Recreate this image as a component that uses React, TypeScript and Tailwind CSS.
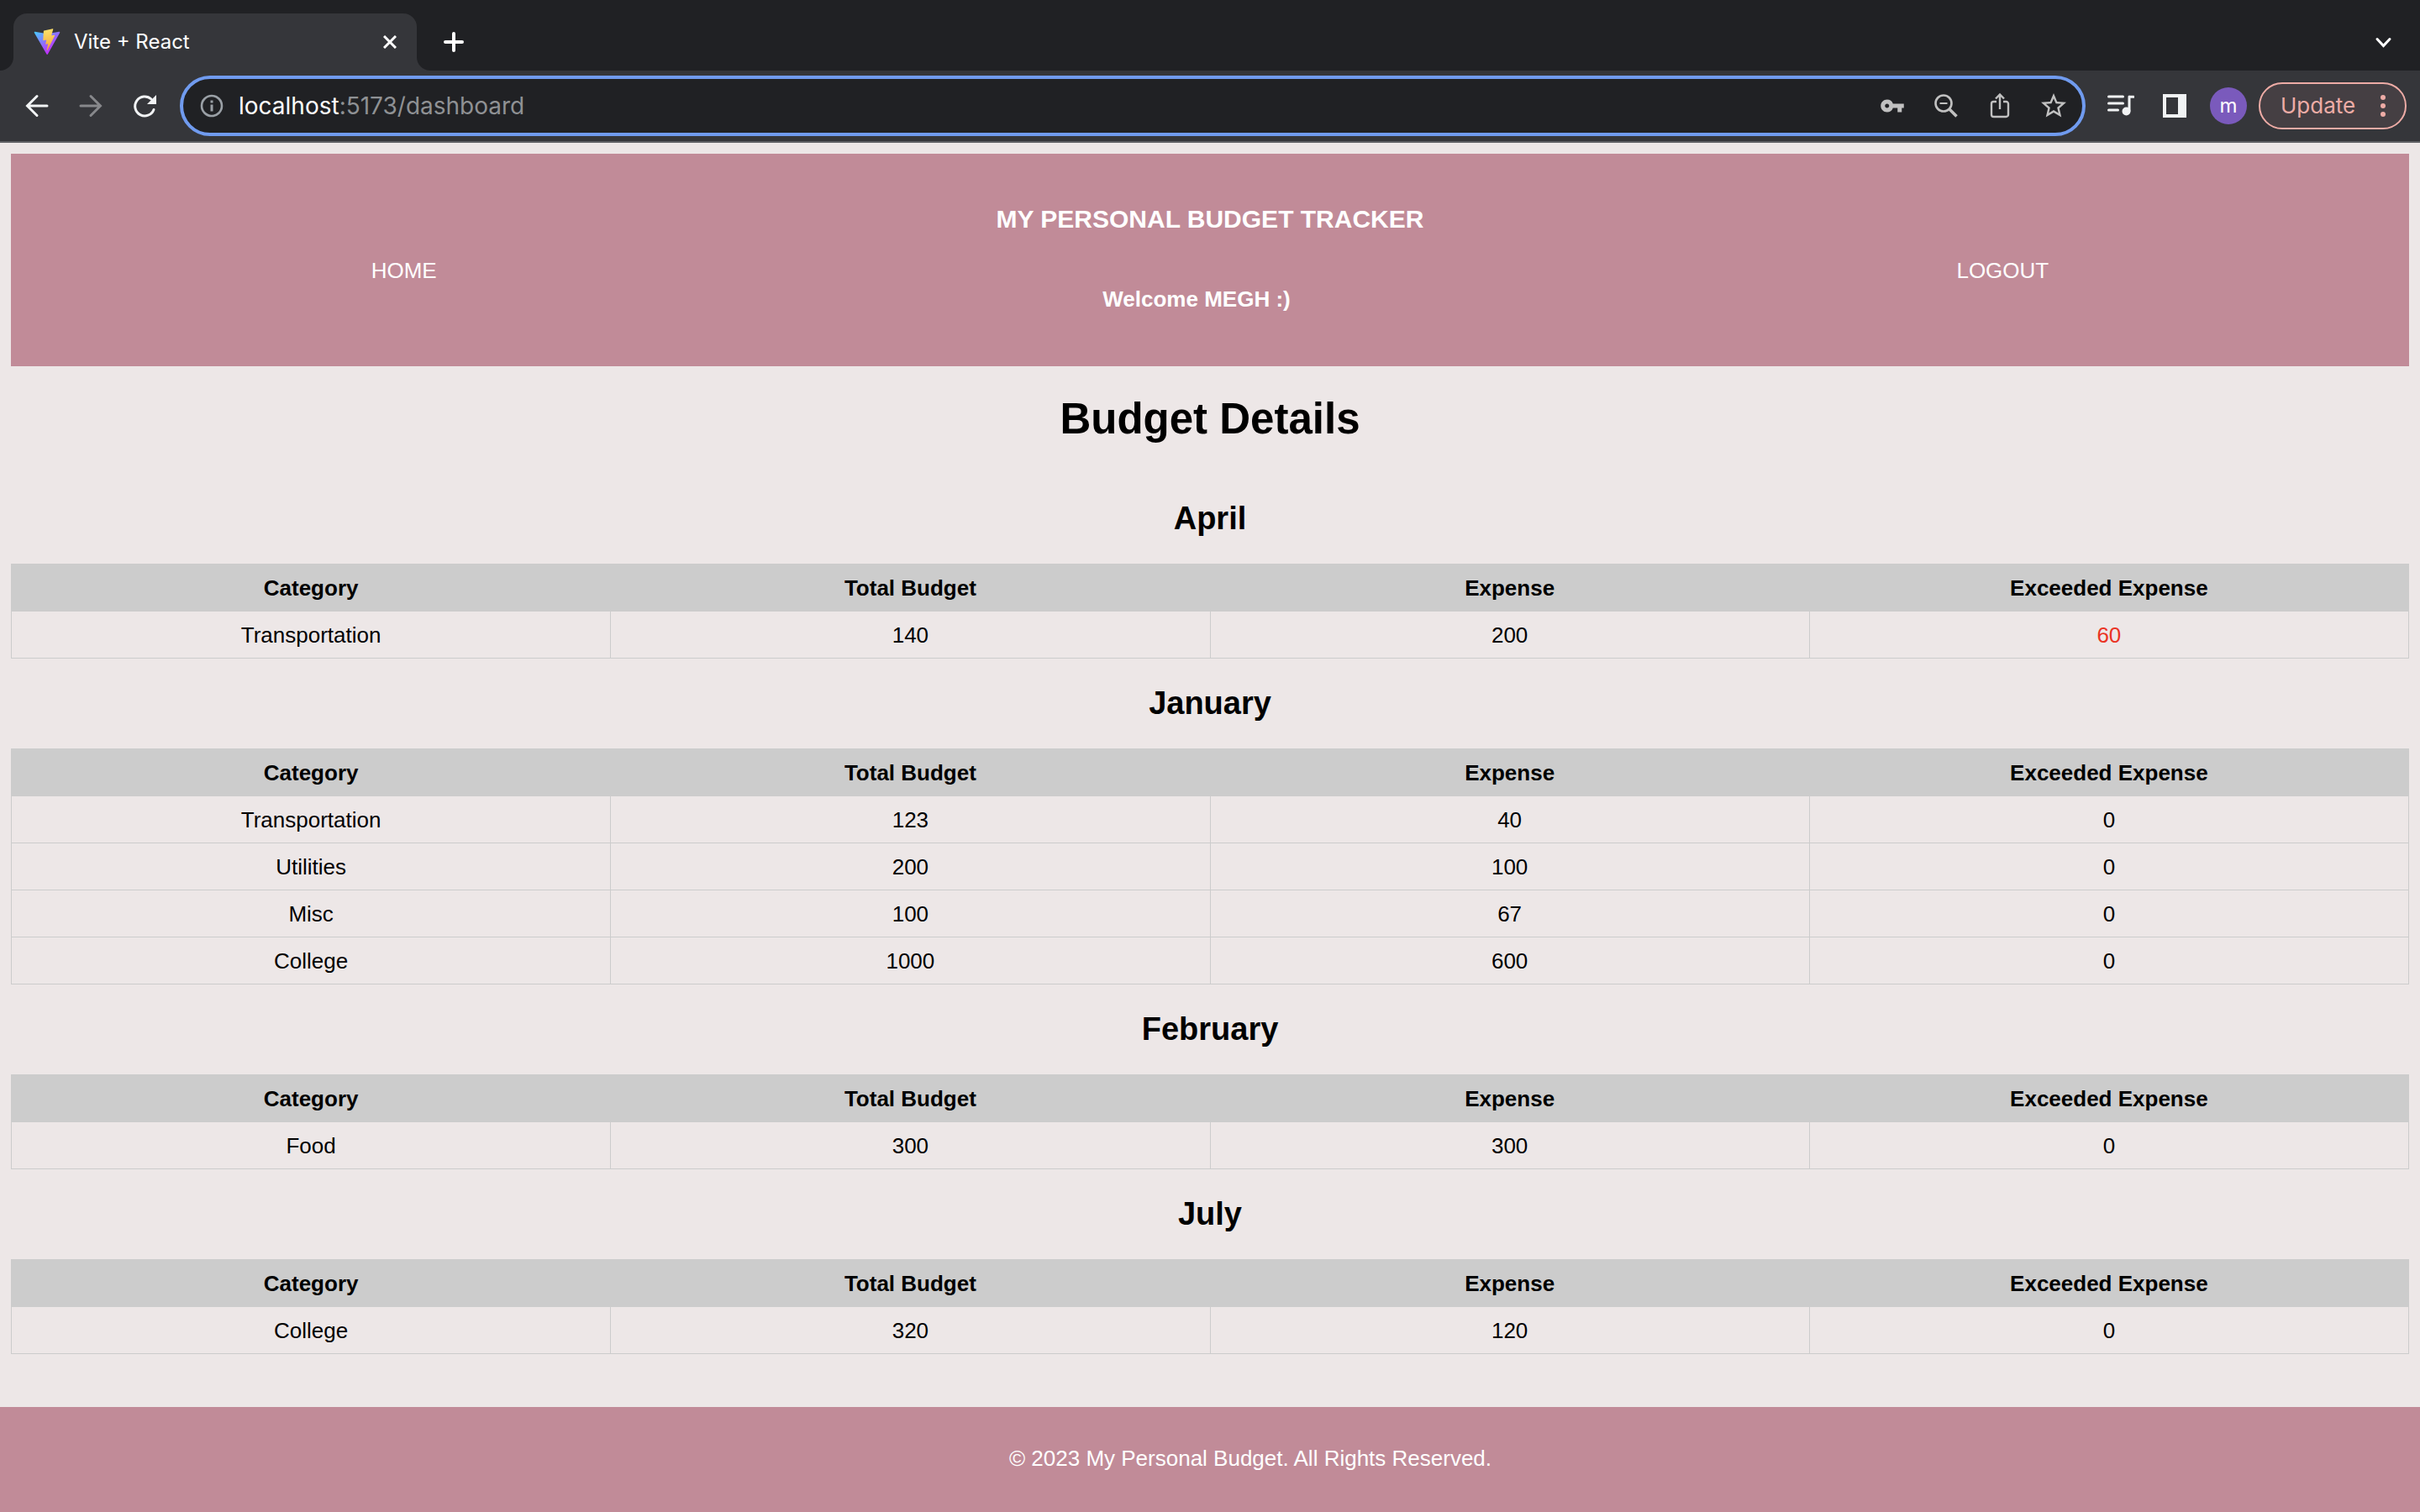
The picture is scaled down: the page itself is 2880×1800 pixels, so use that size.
import React from "react";
import { MdVpnKey } from "react-icons/md";

type Row = { category: string; budget: number; expense: number; exceeded: number };
type Month = { name: string; rows: Row[] };

const months: Month[] = [
  { name: "April", rows: [{ category: "Transportation", budget: 140, expense: 200, exceeded: 60 }] },
  {
    name: "January",
    rows: [
      { category: "Transportation", budget: 123, expense: 40, exceeded: 0 },
      { category: "Utilities", budget: 200, expense: 100, exceeded: 0 },
      { category: "Misc", budget: 100, expense: 67, exceeded: 0 },
      { category: "College", budget: 1000, expense: 600, exceeded: 0 },
    ],
  },
  { name: "February", rows: [{ category: "Food", budget: 300, expense: 300, exceeded: 0 }] },
  { name: "July", rows: [{ category: "College", budget: 320, expense: 120, exceeded: 0 }] },
];

const columns = ["Category", "Total Budget", "Expense", "Exceeded Expense"];

function ViteLogo() {
  return (
    <svg viewBox="0 0 410 404" className="h-8 w-8" aria-hidden="true">
      <defs>
        <linearGradient id="vite-a" x1="6" y1="33" x2="235" y2="344" gradientUnits="userSpaceOnUse">
          <stop stopColor="#41D1FF" />
          <stop offset="1" stopColor="#BD34FE" />
        </linearGradient>
        <linearGradient id="vite-b" x1="194.651" y1="8.818" x2="236.076" y2="292.989" gradientUnits="userSpaceOnUse">
          <stop stopColor="#FFE36B" />
          <stop offset="1" stopColor="#F3A93C" />
        </linearGradient>
      </defs>
      <path
        fill="url(#vite-a)"
        d="M399.641 59.525L215.643 388.545c-3.799 6.793-13.559 6.833-17.415.073L10.582 59.556C6.38 52.19 12.68 43.267 21.028 44.76l184.195 32.923c1.175.21 2.378.208 3.553-.006l180.343-32.87c8.32-1.517 14.649 7.337 10.522 14.719z"
      />
      <path
        fill="url(#vite-b)"
        d="M292.965 1.574L156.801 28.255c-2.238.439-3.906 2.332-4.04 4.609l-8.376 141.464c-.198 3.333 2.863 5.919 6.115 5.168l37.910-8.749c3.547-.818 6.752 2.306 6.023 5.873l-11.263 55.153c-.758 3.712 2.727 6.886 6.352 5.785l23.415-7.114c3.630-1.103 7.118 2.081 6.350 5.796l-17.899 86.633c-1.120 5.419 6.088 8.374 9.094 3.728l2.008-3.103 110.954-221.428c1.858-3.707-1.346-7.935-5.418-7.150l-39.022 7.532c-3.667.707-6.787-2.708-5.752-6.296l25.469-88.291c1.036-3.594-2.094-7.012-5.756-6.291z"
      />
    </svg>
  );
}

function TabStrip() {
  return (
    <div className="flex h-[84px] items-end bg-[#202124]">
      <svg viewBox="0 0 16 16" className="h-4 w-4 text-[#35363a]" aria-hidden="true">
        <path d="M16 0v16H0A16 16 0 0 0 16 0z" fill="currentColor" />
      </svg>
      <div className="flex h-[68px] w-[480px] items-center rounded-t-2xl bg-[#35363a] pr-6 pl-6">
        <ViteLogo />
        <span className="ml-4 flex-1 text-2xl text-white">Vite + React</span>
        <button type="button" aria-label="Close tab" className="text-white">
          <svg viewBox="0 0 16 16" className="h-4 w-4" fill="none" stroke="currentColor" strokeWidth="3">
            <path d="M1 1l14 14M15 1L1 15" />
          </svg>
        </button>
      </div>
      <svg viewBox="0 0 16 16" className="h-4 w-4 text-[#35363a]" aria-hidden="true">
        <path d="M0 0v16h16A16 16 0 0 1 0 0z" fill="currentColor" />
      </svg>
      <button type="button" aria-label="New tab" className="ml-4 flex h-[68px] items-center text-white">
        <svg viewBox="0 0 24 24" className="h-6 w-6" fill="none" stroke="currentColor" strokeWidth="4" strokeLinecap="round">
          <path d="M12 2v20M2 12h20" />
        </svg>
      </button>
      <button type="button" aria-label="Search tabs" className="mr-8 ml-auto flex h-[68px] items-center text-white">
        <svg viewBox="0 0 24 24" className="h-6 w-6" fill="none" stroke="currentColor" strokeWidth="3" strokeLinecap="round">
          <path d="M5 8.500l7.500 8 7.500-8" />
        </svg>
      </button>
    </div>
  );
}

function IconButton({ label, className, children }: { label: string; className?: string; children: React.ReactNode }) {
  return (
    <button type="button" aria-label={label} className={"flex h-8 w-8 shrink-0 items-center justify-center " + (className ?? "")}>
      {children}
    </button>
  );
}

function Toolbar() {
  return (
    <div className="flex h-[86px] items-center border-b-2 border-[#5f6064] bg-[#35363a] pr-4 pl-7 text-[#f1f3f4]">
      <div className="flex items-center gap-8">
        <IconButton label="Back">
          <svg viewBox="0 0 32 32" className="h-8 w-8" fill="none" stroke="currentColor" strokeWidth="3" strokeLinecap="round">
            <path d="M28 16H5M16 4.500L4.500 16 16 27.500" />
          </svg>
        </IconButton>
        <IconButton label="Forward" className="text-[#87888b]">
          <svg viewBox="0 0 32 32" className="h-8 w-8" fill="none" stroke="currentColor" strokeWidth="3" strokeLinecap="round">
            <path d="M4 16h23M16 4.500L27.500 16 16 27.500" />
          </svg>
        </IconButton>
        <IconButton label="Reload">
          <svg viewBox="0 0 32 32" className="h-8 w-8" fill="none" stroke="currentColor" strokeWidth="3" strokeLinecap="round">
            <path d="M27 20.500A11.500 11.500 0 1 1 24 8" />
            <path d="M30 3v11H19z" fill="currentColor" stroke="none" />
          </svg>
        </IconButton>
      </div>

      <div className="ml-[26px] flex h-[72px] flex-1 items-center rounded-full border-4 border-[#709bef] bg-[#202124] px-[18px] text-[#bdc1c6]">
        <IconButton label="Site information" className="text-[#9aa0a6]">
          <svg viewBox="0 0 32 32" className="h-8 w-8" fill="none" stroke="currentColor" strokeWidth="2.600">
            <circle cx="16" cy="16" r="12" />
            <path d="M16 14.500v8M16 9.500v3" strokeWidth="3" />
          </svg>
        </IconButton>
        <div className="ml-4 flex-1 text-[28px] text-[#8f9194]">
          <span className="text-white">localhost</span>:5173/dashboard
        </div>
        <div className="flex items-center gap-8 text-[#c1c1c1]">
          <IconButton label="Passwords">
            <MdVpnKey className="h-[30px] w-[30px]" />
          </IconButton>
          <IconButton label="Zoom">
            <svg viewBox="0 0 32 32" className="h-8 w-8" fill="none" stroke="currentColor" strokeWidth="2.600">
              <circle cx="13" cy="13" r="9.500" />
              <path d="M8.500 13h9" strokeWidth="2" />
              <path d="M20 20l8.500 8.500" strokeWidth="3.600" />
            </svg>
          </IconButton>
          <IconButton label="Share">
            <svg viewBox="0 0 32 32" className="h-8 w-8" fill="none" stroke="currentColor" strokeWidth="2.400">
              <path d="M12 11H8.500A2.500 2.500 0 0 0 6 13.500v13A2.500 2.500 0 0 0 8.500 29h15a2.500 2.500 0 0 0 2.500-2.500v-13a2.500 2.500 0 0 0-2.500-2.500H20" />
              <path d="M16 20V3M11 7.500l5-5 5 5" />
            </svg>
          </IconButton>
          <IconButton label="Bookmark">
            <svg viewBox="0 0 24 24" className="h-9 w-9 shrink-0" fill="currentColor">
              <path d="M22 9.240l-7.190-.62L12 2 9.190 8.630 2 9.240l5.460 4.730L5.820 21 12 17.270 18.180 21l-1.630-7.030L22 9.240zM12 15.400l-3.760 2.270 1-4.280-3.320-2.880 4.380-.38L12 6.100l1.710 4.040 4.380.38-3.320 2.880 1 4.280L12 15.400z" />
            </svg>
          </IconButton>
        </div>
      </div>

      <div className="ml-[26px] flex items-center">
        <IconButton label="Media controls">
          <svg viewBox="0 0 32 32" className="h-8 w-8 shrink-0" fill="none" stroke="currentColor" strokeWidth="3" strokeLinecap="round">
            <path d="M1.500 5h17M1.500 13h17M1.500 21h11M26 5.200h5M26 5v17" />
            <circle cx="22.500" cy="22.500" r="3.500" fill="currentColor" />
          </svg>
        </IconButton>
        <IconButton label="Side panel" className="ml-8">
          <svg viewBox="0 0 32 32" className="h-8 w-8" fill="currentColor">
            <path d="M2 2h28v28H2zM6 6v20h14V6z" fillRule="evenodd" />
          </svg>
        </IconButton>
        <button type="button" aria-label="Profile" className="ml-[26px] flex h-11 w-11 items-center justify-center rounded-full bg-[#7a5abc] text-2xl text-white">
          m
        </button>
        <button type="button" className="ml-3.5 flex h-14 w-44 items-center justify-between rounded-full border-2 border-[#eeaca6] bg-[#453f43] pr-[22px] pl-6 text-[26px] text-[#eeaca6]">
          Update
          <svg viewBox="0 0 8 28" className="h-7 w-2" fill="currentColor" aria-hidden="true">
            <circle cx="4" cy="4" r="3" />
            <circle cx="4" cy="14" r="3" />
            <circle cx="4" cy="24" r="3" />
          </svg>
        </button>
      </div>
    </div>
  );
}

function MonthTable({ month }: { month: Month }) {
  return (
    <section>
      <h2 className="pt-[31px] pb-8 text-center text-[38px] leading-[44px] font-bold">{month.name}</h2>
      <table className="w-full table-fixed border-collapse border border-[#cccccc] text-center">
        <thead>
          <tr className="h-14 bg-[#cccccc]">
            {columns.map((c) => (
              <th key={c} scope="col" className="border border-[#cccccc] font-bold">
                {c}
              </th>
            ))}
          </tr>
        </thead>
        <tbody>
          {month.rows.map((r) => (
            <tr key={r.category} className="h-14">
              <td className="border border-[#cccccc]">{r.category}</td>
              <td className="border border-[#cccccc]">{r.budget}</td>
              <td className="border border-[#cccccc]">{r.expense}</td>
              <td className={r.exceeded > 0 ? "border border-[#cccccc] text-[#ea3323]" : "border border-[#cccccc]"}>{r.exceeded}</td>
            </tr>
          ))}
        </tbody>
      </table>
    </section>
  );
}

export default function App() {
  return (
    <div className="flex min-h-screen flex-col bg-[#ede7e7] font-['Liberation_Sans',Arial,sans-serif] text-[26px] leading-[30px] text-black">
      <div className="font-[Inter,sans-serif]">
        <TabStrip />
        <Toolbar />
      </div>

      <div className="px-[13px] pt-[13px]">
        <header className="grid grid-cols-3 items-center bg-[#c18b98] py-14 text-center text-white">
          <nav className="pt-6 pr-4">
            <a href="#home">HOME</a>
          </nav>
          <div>
            <h3 className="text-[30px] leading-[44px] font-bold">MY PERSONAL BUDGET TRACKER</h3>
            <h4 className="pt-[58px] pr-8 pb-[9px] font-bold">Welcome MEGH :)</h4>
          </div>
          <nav className="pt-6 pr-4">
            <a href="#logout">LOGOUT</a>
          </nav>
        </header>

        <main>
          <h1 className="pt-[33px] pb-[35px] text-center text-[51px] leading-[60px] font-bold">Budget Details</h1>
          {months.map((m) => (
            <MonthTable key={m.name} month={m} />
          ))}
        </main>
      </div>

      <footer className="mt-auto flex h-[125px] items-center justify-center bg-[#c18b98] pb-1 pl-24 text-white">
        <p>© 2023 My Personal Budget. All Rights Reserved.</p>
      </footer>
    </div>
  );
}
